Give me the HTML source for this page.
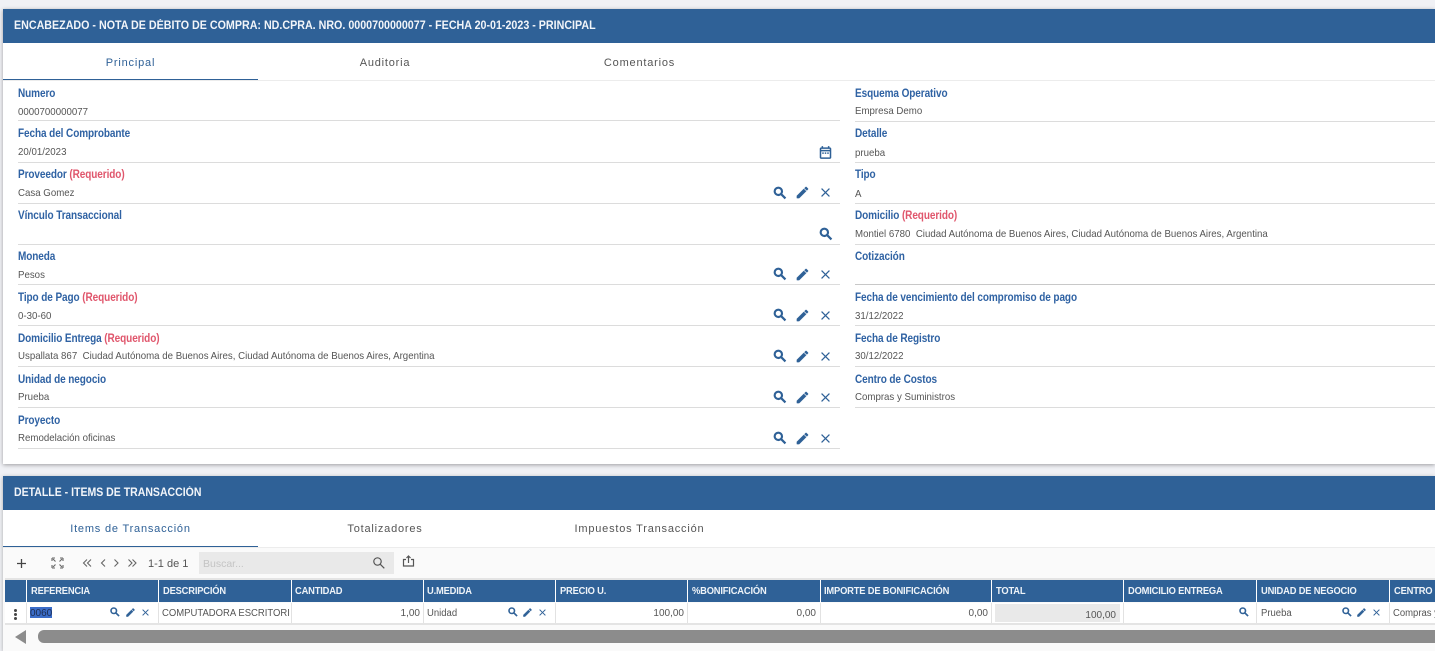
<!DOCTYPE html>
<html lang="es"><head><meta charset="utf-8"><title>Nota de débito</title>
<style>
html,body{margin:0;padding:0}
body{width:1435px;height:651px;overflow:hidden;position:relative;background:#f0f1f5;font-family:"Liberation Sans",sans-serif}
div,svg.i{position:absolute}
.t{position:absolute;white-space:pre;line-height:14px;transform-origin:0 50%}
.h{font-size:11.5px;font-weight:bold;color:#f2f5f9;transform:scaleX(.93)}
.l{font-size:11.5px;font-weight:bold;color:#2f62a3;letter-spacing:-.1px;transform:scaleX(.87)}
.r{color:#e0566c}
.v{font-size:10.5px;color:#555;transform:scaleX(.922)}
.ln{height:1px;background:#dcdcdc}
.tab{font-size:11px;letter-spacing:.8px;color:#555;line-height:14px;text-align:center;top:56px}
.th{position:absolute;font-size:10.5px;font-weight:bold;color:#eef3f8;line-height:14px;top:584px;white-space:pre;letter-spacing:-.2px;transform:scaleX(.89);transform-origin:0 50%}
.td{position:absolute;font-size:10px;color:#555;line-height:14px;top:607px;white-space:pre;transform:scaleX(.95);transform-origin:0 50%}
.n{transform:none}
.sep{width:1px;background:#fff;top:580px;height:22px}
.sep2{width:1px;background:#e2e2e2;top:603px;height:20px}
svg.i{fill:#2f6197}
</style></head><body>
<svg width="0" height="0" style="position:absolute"><defs>
<symbol id="s" viewBox="0 0 24 24"><path stroke="#2f6197" stroke-width="1.2" d="M15.5 14h-.79l-.28-.27A6.471 6.471 0 0 0 16 9.5 6.5 6.5 0 1 0 9.5 16c1.61 0 3.09-.59 4.23-1.57l.27.28v.79l5 4.99L20.49 19l-4.99-5zm-6 0C7.01 14 5 11.99 5 9.5S7.01 5 9.5 5 14 7.01 14 9.5 11.99 14 9.5 14z"/></symbol>
<symbol id="e" viewBox="0 0 24 24"><path stroke="#2f6197" stroke-width=".6" d="M3 17.25V21h3.75L17.81 9.94l-3.75-3.75L3 17.25zM20.71 7.04c.39-.39.39-1.02 0-1.41l-2.34-2.34c-.39-.39-1.02-.39-1.41 0l-1.83 1.83 3.75 3.75 1.83-1.83z"/></symbol>
<symbol id="x" viewBox="0 0 24 24"><path d="M19 6.41L17.59 5 12 10.59 6.41 5 5 6.41 10.59 12 5 17.59 6.41 19 12 13.41 17.59 19 19 17.59 13.41 12z"/></symbol>
<symbol id="c" viewBox="0 0 24 24"><path stroke="#2f6197" stroke-width=".4" d="M19 4h-1V2h-2v2H8V2H6v2H5c-1.1 0-2 .9-2 2v14c0 1.1.9 2 2 2h14c1.1 0 2-.9 2-2V6c0-1.1-.9-2-2-2zm0 16H5V10h14v10zm0-12H5V6h14v2zM7 12h2v2H7zm4 0h2v2h-2zm4 0h2v2h-2z"/></symbol>
</defs></svg>

<!-- Panel 1 -->
<div style="left:3px;top:9px;width:1432px;height:455px;background:#fff;box-shadow:0 1px 4px rgba(0,0,0,.35)"></div>
<div style="left:3px;top:9px;width:1432px;height:34px;background:#2f6197"></div>
<span class="t h" style="left:14px;top:19px">ENCABEZADO - NOTA DE DÉBITO DE COMPRA: ND.CPRA. NRO. 0000700000077 - FECHA 20-01-2023 - PRINCIPAL</span>
<div style="left:3px;top:80px;width:1432px;height:1px;background:#ececec"></div>
<div style="left:3px;top:79px;width:255px;height:1px;background:#2f6197"></div>
<div class="tab" style="left:3px;width:255px;color:#2f6197">Principal</div>
<div class="tab" style="left:258px;width:254px">Auditoria</div>
<div class="tab" style="left:512px;width:255px">Comentarios</div>

<!-- Left column -->
<span class="t l" style="left:18px;top:87px">Numero</span>
<span class="t v" style="left:18px;top:105px">0000700000077</span>
<div class="ln" style="left:18px;top:120px;width:822px"></div>
<span class="t l" style="left:18px;top:127px">Fecha del Comprobante</span>
<span class="t v" style="left:18px;top:145px">20/01/2023</span>
<div class="ln" style="left:18px;top:162px;width:822px"></div>
<span class="t l" style="left:18px;top:168px">Proveedor <span class="r">(Requerido)</span></span>
<span class="t v" style="left:18px;top:186px">Casa Gomez</span>
<div class="ln" style="left:18px;top:203px;width:822px"></div>
<span class="t l" style="left:18px;top:209px">Vínculo Transaccional</span>
<div class="ln" style="left:18px;top:244px;width:822px"></div>
<span class="t l" style="left:18px;top:250px">Moneda</span>
<span class="t v" style="left:18px;top:268px">Pesos</span>
<div class="ln" style="left:18px;top:284px;width:822px"></div>
<span class="t l" style="left:18px;top:291px">Tipo de Pago <span class="r">(Requerido)</span></span>
<span class="t v" style="left:18px;top:309px">0-30-60</span>
<div class="ln" style="left:18px;top:325px;width:822px"></div>
<span class="t l" style="left:18px;top:332px">Domicilio Entrega <span class="r">(Requerido)</span></span>
<span class="t v" style="left:18px;top:349px">Uspallata 867  Ciudad Autónoma de Buenos Aires, Ciudad Autónoma de Buenos Aires, Argentina</span>
<div class="ln" style="left:18px;top:366px;width:822px"></div>
<span class="t l" style="left:18px;top:373px">Unidad de negocio</span>
<span class="t v" style="left:18px;top:390px">Prueba</span>
<div class="ln" style="left:18px;top:407px;width:822px"></div>
<span class="t l" style="left:18px;top:414px">Proyecto</span>
<span class="t v" style="left:18px;top:431px">Remodelación oficinas</span>
<div class="ln" style="left:18px;top:448px;width:822px"></div>

<!-- Right column -->
<span class="t l" style="left:855px;top:87px">Esquema Operativo</span>
<span class="t v" style="left:855px;top:104px">Empresa Demo</span>
<div class="ln" style="left:855px;top:121px;width:580px"></div>
<span class="t l" style="left:855px;top:127px">Detalle</span>
<span class="t v" style="left:855px;top:146px">prueba</span>
<div class="ln" style="left:855px;top:162px;width:580px"></div>
<span class="t l" style="left:855px;top:168px">Tipo</span>
<span class="t v" style="left:855px;top:187px">A</span>
<div class="ln" style="left:855px;top:203px;width:580px"></div>
<span class="t l" style="left:855px;top:209px">Domicilio <span class="r">(Requerido)</span></span>
<span class="t v" style="left:855px;top:227px">Montiel 6780  Ciudad Autónoma de Buenos Aires, Ciudad Autónoma de Buenos Aires, Argentina</span>
<div class="ln" style="left:855px;top:244px;width:580px"></div>
<span class="t l" style="left:855px;top:250px">Cotización</span>
<div class="ln" style="left:855px;top:284px;width:580px;background:#c8c8c8"></div>
<span class="t l" style="left:855px;top:291px">Fecha de vencimiento del compromiso de pago</span>
<span class="t v" style="left:855px;top:309px">31/12/2022</span>
<div class="ln" style="left:855px;top:325px;width:580px"></div>
<span class="t l" style="left:855px;top:332px">Fecha de Registro</span>
<span class="t v" style="left:855px;top:349px">30/12/2022</span>
<div class="ln" style="left:855px;top:366px;width:580px"></div>
<span class="t l" style="left:855px;top:373px">Centro de Costos</span>
<span class="t v" style="left:855px;top:390px">Compras y Suministros</span>
<div class="ln" style="left:855px;top:407px;width:580px"></div>

<!-- Icons -->
<svg class="i" style="left:818px;top:145px" width="15" height="15"><use href="#c"/></svg>
<svg class="i" style="left:772px;top:185px" width="16" height="16"><use href="#s"/></svg><svg class="i" style="left:795px;top:185px" width="15" height="15"><use href="#e"/></svg><svg class="i" style="left:818px;top:185px" width="15" height="15"><use href="#x"/></svg>
<svg class="i" style="left:818px;top:226px" width="16" height="16"><use href="#s"/></svg>
<svg class="i" style="left:772px;top:266px" width="16" height="16"><use href="#s"/></svg><svg class="i" style="left:795px;top:267px" width="15" height="15"><use href="#e"/></svg><svg class="i" style="left:818px;top:267px" width="15" height="15"><use href="#x"/></svg>
<svg class="i" style="left:772px;top:307px" width="16" height="16"><use href="#s"/></svg><svg class="i" style="left:795px;top:308px" width="15" height="15"><use href="#e"/></svg><svg class="i" style="left:818px;top:308px" width="15" height="15"><use href="#x"/></svg>
<svg class="i" style="left:772px;top:348px" width="16" height="16"><use href="#s"/></svg><svg class="i" style="left:795px;top:349px" width="15" height="15"><use href="#e"/></svg><svg class="i" style="left:818px;top:349px" width="15" height="15"><use href="#x"/></svg>
<svg class="i" style="left:772px;top:389px" width="16" height="16"><use href="#s"/></svg><svg class="i" style="left:795px;top:390px" width="15" height="15"><use href="#e"/></svg><svg class="i" style="left:818px;top:390px" width="15" height="15"><use href="#x"/></svg>
<svg class="i" style="left:772px;top:430px" width="16" height="16"><use href="#s"/></svg><svg class="i" style="left:795px;top:431px" width="15" height="15"><use href="#e"/></svg><svg class="i" style="left:818px;top:431px" width="15" height="15"><use href="#x"/></svg>

<!-- Panel 2 -->
<div style="left:3px;top:476px;width:1432px;height:175px;background:#fafafa;box-shadow:0 1px 4px rgba(0,0,0,.3)"></div>
<div style="left:3px;top:476px;width:1432px;height:34px;background:#2f6197"></div>
<span class="t h" style="left:14px;top:486px;transform:scaleX(.915)">DETALLE - ITEMS DE TRANSACCIÓN</span>
<div style="left:3px;top:510px;width:1432px;height:37px;background:#fff"></div>
<div style="left:3px;top:547px;width:1432px;height:1px;background:#ececec"></div>
<div style="left:3px;top:546px;width:255px;height:1px;background:#2f6197"></div>
<div class="tab" style="left:3px;width:255px;top:522px;color:#2f6197">Items de Transacción</div>
<div class="tab" style="left:258px;width:254px;top:522px">Totalizadores</div>
<div class="tab" style="left:512px;width:255px;top:522px">Impuestos Transacción</div>

<!-- Toolbar -->
<svg style="position:absolute;left:0;top:548px" width="420" height="30" fill="none" stroke="#444" stroke-width="1.1">
<path d="M21.500 11v9M17 15.500h9" stroke-width="1.300"/>
<path stroke="#666" d="M52 10h3M52 10v3M63 10h-3M63 10v3M52 20h3M52 20v-3M63 20h-3M63 20v-3M53 11l2.500 2.500M62 11l-2.500 2.500M53 19l2.500-2.500M62 19l-2.500-2.500"/>
<path stroke="#666" d="M87 11.500l-3.500 3.500 3.500 3.500M91 11.500l-3.500 3.500 3.500 3.500M105 11.500l-3.500 3.500 3.500 3.500M114.500 11.500l3.500 3.500-3.500 3.500M128.500 11.500l3.500 3.500-3.500 3.500M132.500 11.500l3.500 3.500-3.500 3.500"/>
</svg>
<span class="t" style="left:148px;top:557px;font-size:11px;color:#555">1-1 de 1</span>
<div style="left:199px;top:552px;width:195px;height:22px;background:#e9e9e9"></div>
<span class="t" style="left:203px;top:557px;font-size:10.500px;color:#c4c4c4">Buscar...</span>
<svg style="position:absolute;left:372px;top:556px" width="13" height="13" fill="none" stroke="#555" stroke-width="1.200"><circle cx="5.500" cy="5.500" r="3.700"/><path d="M8.300 8.300l4 4"/></svg>
<svg style="position:absolute;left:402px;top:555px" width="13" height="13" fill="none" stroke="#555" stroke-width="1.200"><path d="M4 4.500H1.500v6.500h10V4.500H9M6.500 8V1M4.500 3l2-2 2 2"/></svg>

<!-- Table -->
<div style="left:5px;top:578px;width:1430px;height:2px;background:#e4e4e4"></div>
<div style="left:5px;top:580px;width:1430px;height:22px;background:#2f6197"></div>
<div style="left:5px;top:603px;width:1430px;height:20px;background:#fff"></div>
<div style="left:5px;top:623px;width:1430px;height:2px;background:#e4e4e4"></div>
<div class="sep" style="left:26px"></div><div class="sep" style="left:158px"></div><div class="sep" style="left:291px"></div><div class="sep" style="left:423px"></div><div class="sep" style="left:555px"></div><div class="sep" style="left:687px"></div><div class="sep" style="left:820px"></div><div class="sep" style="left:991px"></div><div class="sep" style="left:1123px"></div><div class="sep" style="left:1256px"></div><div class="sep" style="left:1389px"></div>
<div class="sep2" style="left:26px"></div><div class="sep2" style="left:158px"></div><div class="sep2" style="left:291px"></div><div class="sep2" style="left:423px"></div><div class="sep2" style="left:555px"></div><div class="sep2" style="left:687px"></div><div class="sep2" style="left:820px"></div><div class="sep2" style="left:991px"></div><div class="sep2" style="left:1123px"></div><div class="sep2" style="left:1256px"></div><div class="sep2" style="left:1389px"></div>

<span class="th" style="left:31px">REFERENCIA</span>
<span class="th" style="left:163px">DESCRIPCIÓN</span>
<span class="th" style="left:295px">CANTIDAD</span>
<span class="th" style="left:427px">U.MEDIDA</span>
<span class="th" style="left:560px">PRECIO U.</span>
<span class="th" style="left:692px">%BONIFICACIÓN</span>
<span class="th" style="left:824px">IMPORTE DE BONIFICACIÓN</span>
<span class="th" style="left:996px">TOTAL</span>
<span class="th" style="left:1128px">DOMICILIO ENTREGA</span>
<span class="th" style="left:1261px">UNIDAD DE NEGOCIO</span>
<span class="th" style="left:1394px">CENTRO DE</span>

<!-- kebab -->
<div style="left:14px;top:609px;width:3px;height:3px;background:#444;border-radius:50%"></div>
<div style="left:14px;top:613px;width:3px;height:3px;background:#444;border-radius:50%"></div>
<div style="left:14px;top:617px;width:3px;height:3px;background:#444;border-radius:50%"></div>

<div style="left:30px;top:607px;width:22px;height:11px;background:#3a6cc8"></div>
<span class="td" style="left:30px;color:#1c2c50;transform:none">0060</span>
<svg class="i" style="left:109px;top:606px" width="12" height="12"><use href="#s"/></svg><svg class="i" style="left:125px;top:607px" width="11" height="11"><use href="#e"/></svg><svg class="i" style="left:140px;top:607px" width="11" height="11"><use href="#x"/></svg>
<div style="left:162px;top:603px;width:128px;height:20px;overflow:hidden"><span class="td" style="left:0;top:4px">COMPUTADORA ESCRITORIO</span></div>
<span class="td n" style="right:1015px">1,00</span>
<span class="td" style="left:427px">Unidad</span>
<svg class="i" style="left:507px;top:606px" width="12" height="12"><use href="#s"/></svg><svg class="i" style="left:522px;top:607px" width="11" height="11"><use href="#e"/></svg><svg class="i" style="left:537px;top:607px" width="11" height="11"><use href="#x"/></svg>
<span class="td n" style="right:751px">100,00</span>
<span class="td n" style="right:619px">0,00</span>
<span class="td n" style="right:447px">0,00</span>
<div style="left:995px;top:604px;width:125px;height:18px;background:#e9e9e9"></div>
<span class="td n" style="right:319px;top:609px">100,00</span>
<svg class="i" style="left:1238px;top:606px" width="12" height="12"><use href="#s"/></svg>
<span class="td" style="left:1261px">Prueba</span>
<svg class="i" style="left:1341px;top:606px" width="12" height="12"><use href="#s"/></svg><svg class="i" style="left:1356px;top:607px" width="11" height="11"><use href="#e"/></svg><svg class="i" style="left:1371px;top:607px" width="11" height="11"><use href="#x"/></svg>
<div style="left:1393px;top:603px;width:42px;height:20px;overflow:hidden"><span class="td" style="left:0;top:4px">Compras y</span></div>

<!-- Scrollbar -->
<svg style="position:absolute;left:14px;top:629px" width="13" height="16"><path d="M12 1v14L1 8z" fill="#8c8c8c"/></svg>
<div style="left:38px;top:630px;width:1397px;height:13px;background:#8c8c8c;border-radius:6px 0 0 6px"></div>
</body></html>
